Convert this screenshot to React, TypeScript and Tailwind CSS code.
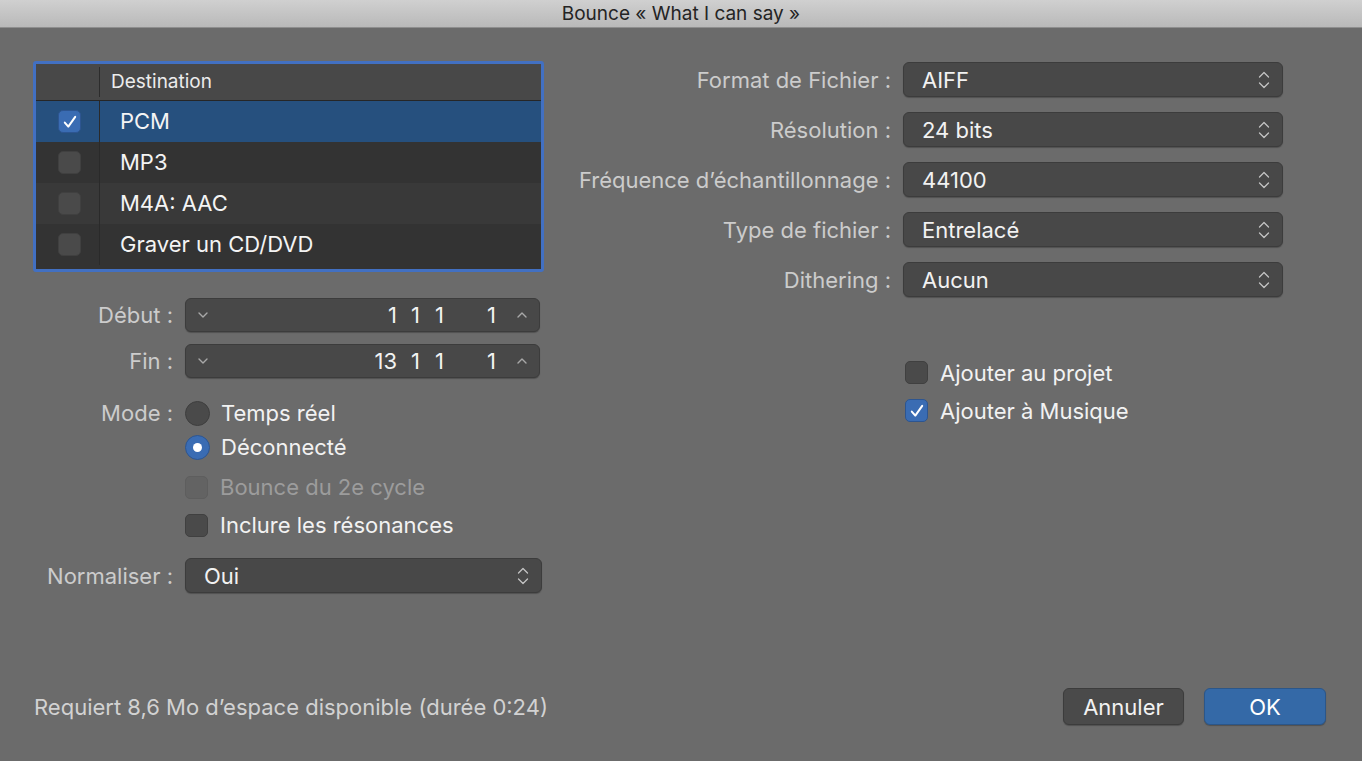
import React from 'react';

const FONT = { fontFamily: 'Inter, "Liberation Sans", sans-serif' };

// Thin up/down double chevron used on popup buttons
const PopupArrows = () => (
  <svg width="12" height="20" viewBox="0 0 12 20" fill="none" stroke="#c4c4c4" strokeWidth="1.3" strokeLinecap="round" strokeLinejoin="round">
    <path d="M1.5 7 L6 2.5 L10.5 7" />
    <path d="M1.5 13 L6 17.5 L10.5 13" />
  </svg>
);

const Chevron: React.FC<{ up?: boolean }> = ({ up }) => (
  <svg width="12" height="8" viewBox="0 0 12 8" fill="none" stroke="#a8a8a8" strokeWidth="1.4" strokeLinecap="round" strokeLinejoin="round">
    {up ? <path d="M2 6 L6 2 L10 6" /> : <path d="M2 2 L6 6 L10 2" />}
  </svg>
);

const CheckMark = () => (
  <svg width="16" height="16" viewBox="0 0 16 16" fill="none" stroke="#ffffff" strokeWidth="2" strokeLinecap="round" strokeLinejoin="round">
    <path d="M2.8 8.6 L6.3 12.6 L13.2 2.8" />
  </svg>
);

const Checkbox: React.FC<{ checked?: boolean; disabled?: boolean }> = ({ checked, disabled }) => (
  <div
    className={`w-[23px] h-[23px] rounded-[5px] flex items-center justify-center shrink-0 border ${
      checked
        ? 'bg-[#3a6cb3] border-[#2d5590]'
        : disabled
        ? 'bg-[#636363] border-[#5e5e5e]'
        : 'bg-[#4a4a4a] border-[#404040]'
    }`}
  >
    {checked && <CheckMark />}
  </div>
);

const Radio: React.FC<{ selected?: boolean }> = ({ selected }) => (
  <div
    className={`w-[25px] h-[25px] rounded-full flex items-center justify-center shrink-0 border ${
      selected ? 'bg-[#3a6cb3] border-[#2d5590]' : 'bg-[#4a4a4a] border-[#3e3e3e]'
    }`}
  >
    {selected && <div className="w-[9px] h-[9px] rounded-full bg-white" />}
  </div>
);

const Popup: React.FC<{ value: string; className?: string }> = ({ value, className }) => (
  <div
    className={`h-[35px] rounded-[6px] bg-[#484848] border border-[#3c3c3c] shadow-[0_1px_1px_rgba(0,0,0,0.25)] flex items-center pl-[18px] pr-[12px] ${className ?? ''}`}
  >
    <span className="flex-1 text-[22px] leading-none text-[#f2f2f2]">{value}</span>
    <PopupArrows />
  </div>
);

const Stepper: React.FC<{ bar: string }> = ({ bar }) => (
  <div className="w-[355px] h-[34px] rounded-[6px] bg-[#484848] border border-[#3c3c3c] shadow-[0_1px_1px_rgba(0,0,0,0.25)] flex items-center pl-[11px] pr-[11px]">
    <Chevron />
    <div className="flex-1 flex justify-end text-[22px] leading-none text-[#f2f2f2] pr-[20px]">
      <span className="w-[40px] text-right">{bar}</span>
      <span className="w-[23px] text-right">1</span>
      <span className="w-[24px] text-right">1</span>
      <span className="w-[52px] text-right">1</span>
    </div>
    <Chevron up />
  </div>
);

// label column + control, one row of the left form
const FormRow: React.FC<{ label?: string; className: string; children: React.ReactNode }> = ({ label, className, children }) => (
  <div className={`flex items-center ${className}`}>
    <span className="w-[140px] shrink-0 text-right text-[22px] leading-none text-[#cccccc] whitespace-nowrap">{label}</span>
    <div className="ml-[12px] flex items-center">{children}</div>
  </div>
);

const rows = [
  { name: 'PCM', checked: true, bg: 'bg-[#26507e]' },
  { name: 'MP3', checked: false, bg: 'bg-[#333333]' },
  { name: 'M4A: AAC', checked: false, bg: 'bg-[#393939]' },
  { name: 'Graver un CD/DVD', checked: false, bg: 'bg-[#333333]' },
];

const rightFields = [
  { label: 'Format de Fichier :', value: 'AIFF' },
  { label: 'Résolution :', value: '24 bits' },
  { label: 'Fréquence d’échantillonnage :', value: '44100' },
  { label: 'Type de fichier :', value: 'Entrelacé' },
  { label: 'Dithering :', value: 'Aucun' },
];

export default function App() {
  return (
    <div className="w-[1362px] h-[761px] bg-[#6b6b6b] flex flex-col overflow-hidden" style={FONT}>
      {/* window title */}
      <div className="h-[28px] shrink-0 bg-gradient-to-b from-[#d0d0d0] to-[#b9b9b9] border-b border-[#8e8e8e] flex items-center justify-center">
        <span className="text-[19px] leading-none text-[#242424]">Bounce « What I can say »</span>
      </div>

      <div className="flex-1 flex flex-col">
        <div className="flex">
          {/* left column */}
          <div className="ml-[33px] mt-[33px] w-[511px] flex flex-col">
            <div className="h-[211px] border-[3px] border-[#4270c2] rounded-[3px] bg-[#333333] overflow-hidden flex flex-col">
              <div className="h-[37px] shrink-0 bg-[#484848] border-b border-[#262626] flex">
                <div className="w-[64px] h-full flex items-center justify-end">
                  <div className="w-px h-[30px] bg-[#2c2c2c]" />
                </div>
                <span className="pl-[11px] flex items-center text-[19px] text-[#ececec]">Destination</span>
              </div>
              {rows.map((r) => (
                <div key={r.name} className={`h-[41px] flex ${r.bg}`}>
                  <div className="w-[64px] h-full flex items-center justify-center border-r border-[#2a2a2a] pl-[4px]">
                    <Checkbox checked={r.checked} />
                  </div>
                  <span className="pl-[20px] flex items-center text-[22px] text-[#f4f4f4]">{r.name}</span>
                </div>
              ))}
            </div>

            <div className="mt-[26px] flex flex-col text-[22px] leading-none">
              <FormRow label="Début :" className="h-[34px]">
                <Stepper bar="1" />
              </FormRow>
              <FormRow label="Fin :" className="h-[34px] mt-[12px]">
                <Stepper bar="13" />
              </FormRow>
              <FormRow label="Mode :" className="h-[24px] mt-[23px]">
                <Radio />
                <span className="ml-[11px] text-[#f2f2f2]">Temps réel</span>
              </FormRow>
              <FormRow className="h-[24px] mt-[10px]">
                <Radio selected />
                <span className="ml-[11px] text-[#f2f2f2]">Déconnecté</span>
              </FormRow>
              <FormRow className="h-[24px] mt-[16px]">
                <Checkbox disabled />
                <span className="ml-[12px] text-[#9c9c9c]">Bounce du 2e cycle</span>
              </FormRow>
              <FormRow className="h-[24px] mt-[14px]">
                <Checkbox />
                <span className="ml-[12px] text-[#f2f2f2]">Inclure les résonances</span>
              </FormRow>
              <FormRow label="Normaliser :" className="h-[35px] mt-[21px]">
                <Popup value="Oui" className="w-[357px]" />
              </FormRow>
            </div>
          </div>

          {/* right column */}
          <div className="ml-[16px] mt-[34px] flex flex-col">
            <div className="grid grid-cols-[331px_380px] gap-x-[12px] gap-y-[15px] items-center">
              {rightFields.map((f) => (
                <React.Fragment key={f.label}>
                  <span className="text-right text-[22px] leading-none text-[#cccccc] whitespace-nowrap">{f.label}</span>
                  <Popup value={f.value} />
                </React.Fragment>
              ))}
            </div>
            <div className="ml-[345px] mt-[64px] flex flex-col gap-[15px] text-[22px] leading-none">
              <div className="h-[23px] flex items-center gap-[12px]">
                <Checkbox />
                <span className="text-[#f2f2f2]">Ajouter au projet</span>
              </div>
              <div className="h-[23px] flex items-center gap-[12px]">
                <Checkbox checked />
                <span className="text-[#f2f2f2]">Ajouter à Musique</span>
              </div>
            </div>
          </div>
        </div>

        {/* footer */}
        <div className="mt-auto mb-[36px] flex items-center pl-[34px] pr-[36px]">
          <span className="flex-1 text-[22px] leading-none text-[#d2d2d2]">Requiert 8,6 Mo d’espace disponible (durée 0:24)</span>
          <button className="w-[121px] h-[37px] rounded-[6px] bg-[#4a4a4a] border border-[#3c3c3c] shadow-[0_1px_1px_rgba(0,0,0,0.25)] text-[22px] leading-none text-[#f2f2f2]">
            Annuler
          </button>
          <button className="ml-[20px] w-[122px] h-[37px] rounded-[6px] bg-[#3469a7] border border-[#2b5689] shadow-[0_1px_1px_rgba(0,0,0,0.25)] text-[22px] leading-none text-white">
            OK
          </button>
        </div>
      </div>
    </div>
  );
}
